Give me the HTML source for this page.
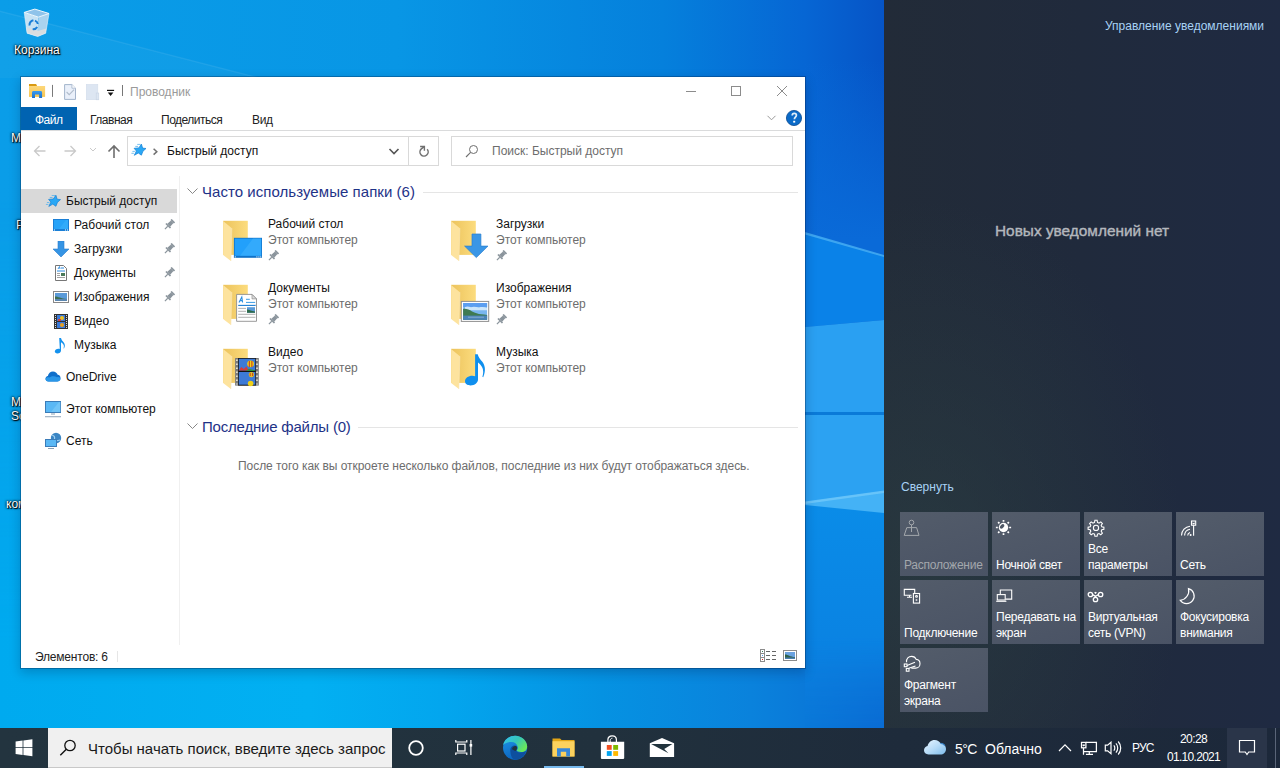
<!DOCTYPE html>
<html><head><meta charset="utf-8">
<style>
*{margin:0;padding:0;box-sizing:border-box}
html,body{width:1280px;height:768px;overflow:hidden;font-family:"Liberation Sans",sans-serif;font-size:12px;background:#0a90e0}
.a{position:absolute;white-space:nowrap}
#wall{position:absolute;left:0;top:0;width:1280px;height:768px}
#win{position:absolute;left:20px;top:76px;width:786px;height:593px;background:#fff;border:1px solid rgba(0,30,70,.32);background-clip:padding-box;box-shadow:0 4px 10px rgba(0,20,60,.22)}
#ac{position:absolute;left:884px;top:0;width:396px;height:728px;background:radial-gradient(ellipse 260px 360px at 40px 560px,rgba(44,64,68,.6),rgba(44,64,68,0)),linear-gradient(90deg,#222b38 0%,#202a3c 50%,#1f2a42 100%)}
#tb{position:absolute;left:0;top:728px;width:1280px;height:40px;background:linear-gradient(90deg,#23343f 0,#21313d 600px,#1e2b3b 900px,#1c283a 100%)}
.tile{position:absolute;width:88px;height:64px;background:linear-gradient(160deg,#535c6a,#4a5365)}
.tile .l{position:absolute;left:4px;bottom:3px;color:#fff;font-size:12px;line-height:16px;white-space:nowrap;letter-spacing:-0.25px}
.dl{position:absolute;color:#fff;font-size:12px;line-height:12px;white-space:nowrap;text-shadow:0 0 2px #000,0 0 3px rgba(0,0,0,.8),1px 1px 1px #000}
</style></head><body>
<svg id="wall" width="1280" height="768" viewBox="0 0 1280 768">
 <defs>
  <linearGradient id="wt" x1="0" y1="0" x2="884" y2="0" gradientUnits="userSpaceOnUse">
   <stop offset="0" stop-color="#0a9de8"/>
   <stop offset="0.45" stop-color="#0896e5"/>
   <stop offset="0.75" stop-color="#0580dc"/>
   <stop offset="0.91" stop-color="#0666d4"/>
   <stop offset="1" stop-color="#0654c6"/>
  </linearGradient>
  <linearGradient id="wb" x1="0" y1="0" x2="884" y2="0" gradientUnits="userSpaceOnUse">
   <stop offset="0" stop-color="#00aaef"/>
   <stop offset="0.35" stop-color="#02b0f2"/>
   <stop offset="0.5" stop-color="#03a6ee"/>
   <stop offset="0.68" stop-color="#0592e2"/>
   <stop offset="0.85" stop-color="#0a82dc"/>
   <stop offset="1" stop-color="#0a6cd4"/>
  </linearGradient>
  <linearGradient id="wbv" x1="0" y1="200" x2="0" y2="728" gradientUnits="userSpaceOnUse"><stop offset="0" stop-color="#fff" stop-opacity="0"/><stop offset=".85" stop-color="#fff" stop-opacity="1"/></linearGradient>
  <mask id="mb"><rect x="0" y="200" width="884" height="528" fill="url(#wbv)"/></mask>
  <linearGradient id="rtop" x1="0" y1="60" x2="0" y2="240" gradientUnits="userSpaceOnUse"><stop offset="0" stop-color="#0a6ad8" stop-opacity="0"/><stop offset="1" stop-color="#0a6ad8" stop-opacity="1"/></linearGradient>
  <linearGradient id="rbot" x1="0" y1="505" x2="0" y2="728" gradientUnits="userSpaceOnUse"><stop offset="0" stop-color="#0a8ce8"/><stop offset=".7" stop-color="#0a82e2"/><stop offset="1" stop-color="#0a78dc"/></linearGradient>
 <linearGradient id="mrg" x1="0" y1="500" x2="0" y2="728" gradientUnits="userSpaceOnUse"><stop offset="0" stop-color="#fff"/><stop offset=".6" stop-color="#fff"/><stop offset="1" stop-color="#fff" stop-opacity="0"/></linearGradient>
  <mask id="mr"><rect x="800" y="500" width="90" height="228" fill="url(#mrg)"/></mask>
 </defs>
 <rect width="1280" height="768" fill="url(#wt)"/>
 <rect x="0" y="200" width="884" height="528" fill="url(#wb)" mask="url(#mb)"/>
 <path d="M0 11L260 78 0 78z" fill="#ffffff" opacity=".03"/>
 <path d="M0 10.5L260 77.5 260 79 0 12z" fill="#ffffff" opacity=".07"/>
 <!-- right strip panes -->
 <path d="M805 60H884V256L805 233z" fill="url(#rtop)"/>
 <path d="M805 233L884 256V320L805 327z" fill="#0a82e8"/>
 <path d="M805 232L884 255V257L805 234.5z" fill="#4ab0f4" opacity=".8"/>
 <path d="M805 327L884 320V413H805z" fill="#2aa0f2"/>
 <rect x="805" y="412" width="79" height="3" fill="#0a7ad8"/>
 <path d="M805 415H884V492L805 503z" fill="#2ca2f2"/>
 <path d="M805 502L884 491 884 514 805 506z" fill="#44b2f6"/>
 <path d="M805 501.5L884 490.5 884 493 805 504z" fill="#70c8fa" opacity=".8"/>
 <path d="M805 505L884 513V728H805z" fill="url(#rbot)" mask="url(#mr)"/>
</svg>
<!-- desktop icons -->
<svg class="a" style="left:10px;top:4px" width="56" height="40" viewBox="0 0 56 40">
 <path d="M14.2 8.4L17.1 29.2 27.7 32.5 28.4 13.1z" fill="#c6e2f4"/>
 <path d="M28.4 13.1L27.7 32.5 35.7 29.2 39 9.5z" fill="#a9d3ef"/>
 <path d="M16.2 23L17.1 29.2 27.7 32.5 35.7 29.2 36.3 24.5 27.8 27z" fill="#d9dde0"/>
 <path d="M14.2 8.4L24.8 5.1 39 9.5 28.4 13.1z" fill="#8fc3ea"/>
 <path d="M14.2 8.4L24.8 5.1 39 9.5 28.4 13.1z" fill="none" stroke="#eef7fd" stroke-width="1"/>
 <path d="M14.2 8.4L17.1 29.2 27.7 32.5 35.7 29.2 39 9.5" fill="none" stroke="#e6f2fa" stroke-width=".6"/>
 <g fill="none" stroke="#1b7fd8" stroke-width="2"><path d="M19.6 21.5c-.5-2.3 1.2-4.8 3.8-5.3"/><path d="M25 16.6c1.6.6 2.6 1.8 2.8 3.4"/><path d="M27.2 22.9c-.9 1.6-2.6 2.4-4.5 2.2"/></g>
</svg>
<div class="dl" style="left:14px;top:44px">Корзина</div>
<div class="dl" style="left:11px;top:132px">Microsoft Edge</div>
<div class="dl" style="left:16px;top:219px">Panel</div>
<div class="dl" style="left:11px;top:396px">Microsoft</div>
<div class="dl" style="left:11px;top:410px">Solitaire</div>
<div class="dl" style="left:6px;top:498px">компьютер</div>
<div id="ac"></div>
<div id="tb"></div>
<!-- EXPLORER WINDOW -->
<div id="win"></div>
<!-- title bar icons -->
<svg class="a" style="left:26px;top:80px" width="96" height="24" viewBox="0 0 96 24">
 <defs><linearGradient id="fy" x1="0" y1="0" x2="0" y2="1"><stop offset="0" stop-color="#fdd77a"/><stop offset="1" stop-color="#f7c652"/></linearGradient>
 <linearGradient id="fbl" x1="0" y1="0" x2="0" y2="1"><stop offset="0" stop-color="#3a9bef"/><stop offset="1" stop-color="#1d6fca"/></linearGradient></defs>
 <path d="M3 4.1h7l1 1.3-1 1.4H3z" fill="#d99a12"/>
 <rect x="3" y="6" width="16.1" height="10.9" fill="url(#fy)"/>
 <path d="M6 18V12.6c0-.9.6-1.5 1.5-1.5h7.1c.9 0 1.5.6 1.5 1.5V18h-3v-3.4H9V18z" fill="url(#fbl)"/>
 <rect x="26" y="4.9" width="1" height="12" fill="#7a7a7a"/>
 <path d="M38.6 4.6h7.3l3.6 3.6v11.2H38.6z" fill="#eaf0fa" stroke="#a3b4cc" stroke-width="1"/>
 <path d="M45.9 4.6v3.6h3.6" fill="#fff" stroke="#a3b4cc" stroke-width=".8"/>
 <path d="M40.6 12l2.6 2.6 4.9-4.9" fill="none" stroke="#b0bccb" stroke-width="1.1"/>
 <rect x="60.3" y="4.4" width="11.5" height="15.3" fill="#dde6f2" stroke="#d3ddeb" stroke-width=".6"/>
 <rect x="70.2" y="13" width="2.6" height="6.8" fill="#dde6f2" stroke="#c8d3e3" stroke-width=".6"/>
 <rect x="81" y="9.8" width="7.1" height="1.2" fill="#111"/>
 <path d="M81.8 12.6h5.6L84.6 16z" fill="#111"/>
</svg>
<div class="a" style="left:122px;top:85px;width:1px;height:11px;background:#777"></div>
<div class="a" style="left:130px;top:86px;font-size:12px;line-height:12px;color:#9a9a9a">Проводник</div>
<!-- window buttons -->
<div class="a" style="left:686px;top:91px;width:10px;height:1px;background:#8c8c8c"></div>
<div class="a" style="left:731px;top:86px;width:10px;height:10px;border:1px solid #8c8c8c"></div>
<svg class="a" style="left:776px;top:85px" width="12" height="12" viewBox="0 0 12 12"><path d="M1 1L11 11M11 1L1 11" stroke="#8c8c8c" stroke-width="1"/></svg>
<!-- ribbon tabs -->
<div class="a" style="left:21px;top:107px;width:56px;height:23px;background:#0063b1"></div>
<div class="a" style="left:35px;top:114px;font-size:12px;line-height:12px;color:#fff;letter-spacing:-0.5px">Файл</div>
<div class="a" style="left:90px;top:114px;font-size:12px;line-height:12px;color:#222;letter-spacing:-0.5px">Главная</div>
<div class="a" style="left:161px;top:114px;font-size:12px;line-height:12px;color:#222;letter-spacing:-0.5px">Поделиться</div>
<div class="a" style="left:252px;top:114px;font-size:12px;line-height:12px;color:#222;letter-spacing:-0.3px">Вид</div>
<svg class="a" style="left:766px;top:113px" width="11" height="9" viewBox="0 0 11 9"><path d="M1.5 2.8l4 4 4-4" fill="none" stroke="#999" stroke-width="1"/></svg>
<svg class="a" style="left:785px;top:109px" width="18" height="18" viewBox="0 0 18 18">
 <circle cx="9" cy="9" r="7.6" fill="#0a6ac8" stroke="#0a4a90" stroke-width=".8"/>
 <path d="M7.2 6.6c0-1.4.8-2.3 2.1-2.3 1.3 0 2.1.8 2.1 2 0 1.7-2 2-2 3.9" fill="none" stroke="#dcecf8" stroke-width="1.7"/>
 <rect x="8.2" y="11.8" width="2" height="1.8" fill="#fff"/>
</svg>
<div class="a" style="left:21px;top:130px;width:784px;height:1px;background:#dadbdc"></div>
<!-- nav arrows -->
<svg class="a" style="left:33px;top:144px" width="14" height="14" viewBox="0 0 14 14"><path d="M1.5 7h11M6.5 2L1.5 7l5 5" fill="none" stroke="#c9c9c9" stroke-width="1.3"/></svg>
<svg class="a" style="left:63px;top:144px" width="14" height="14" viewBox="0 0 14 14"><path d="M1.5 7h11M7.5 2l5 5-5 5" fill="none" stroke="#c9c9c9" stroke-width="1.3"/></svg>
<svg class="a" style="left:89px;top:147px" width="8" height="6" viewBox="0 0 8 6"><path d="M1 1l3 3 3-3" fill="none" stroke="#c9c9c9" stroke-width="1"/></svg>
<svg class="a" style="left:107px;top:144px" width="14" height="15" viewBox="0 0 14 15"><path d="M7 14V2M1.5 7.5L7 2l5.5 5.5" fill="none" stroke="#6e6e6e" stroke-width="1.6"/></svg>
<!-- address box -->
<div class="a" style="left:127px;top:136px;width:312px;height:30px;border:1px solid #d9d9d9"></div>
<div class="a" style="left:408px;top:137px;width:1px;height:28px;background:#d9d9d9"></div>
<svg class="a" style="left:128px;top:138px" width="36" height="24" viewBox="0 0 36 24">
 <path d="M13.4 6.1L14.6 10.1 18 10.5 14.9 13.3 13.4 17.2 10.3 15 6.3 17.3 8.4 13 6.1 10.3 10.8 9.9z" fill="#2aa8f5" stroke="#137fd6" stroke-width=".7" stroke-linejoin="round"/>
 <path d="M9.2 6.4h3.3M7.3 8.4h2.8M4.4 13.4h2.5M3.4 15.3h2.5" stroke="#58b4ee" stroke-width="1" opacity=".8"/>
 <path d="M25.6 10.8l3.2 2.9-3.2 2.9" fill="none" stroke="#707070" stroke-width="1.5"/>
</svg>
<div class="a" style="left:167px;top:145px;font-size:12px;line-height:12px;color:#111">Быстрый доступ</div>
<svg class="a" style="left:388px;top:147px" width="12" height="9" viewBox="0 0 12 9"><path d="M1.5 2l4.5 4.5L10.5 2" fill="none" stroke="#555" stroke-width="1.6"/></svg>
<svg class="a" style="left:412px;top:140px" width="24" height="24" viewBox="0 0 24 24"><path d="M15.2 9.3A4.1 4.1 0 1 1 9.3 8.9L12 6.9" fill="none" stroke="#707070" stroke-width="1.5"/><path d="M8.1 6.5H12.4V10.7" fill="none" stroke="#707070" stroke-width="1.4"/></svg>
<!-- search box -->
<div class="a" style="left:451px;top:136px;width:342px;height:30px;border:1px solid #d9d9d9"></div>
<svg class="a" style="left:465px;top:144px" width="14" height="14" viewBox="0 0 14 14"><circle cx="8.5" cy="5.5" r="4" fill="none" stroke="#6e6e6e" stroke-width="1"/><path d="M5.6 8.4L1 13" stroke="#6e6e6e" stroke-width="1.1"/></svg>
<div class="a" style="left:492px;top:145px;font-size:12px;line-height:12px;color:#6d6d6d">Поиск: Быстрый доступ</div>
<!-- NAV PANE -->
<div class="a" style="left:21px;top:189px;width:156px;height:24px;background:#d9d9d9"></div>
<div class="a" style="left:179px;top:176px;width:1px;height:469px;background:#f0f0f0"></div>
<svg class="a" style="left:40px;top:190px" width="24" height="20" viewBox="0 0 24 20">
 <path d="M15.9 5.2L17.1 9.2 20.5 9.6 17.4 12.4 15.9 16.3 12.8 14.1 8.8 16.4 10.9 12.1 8.6 9.4 13.3 9z" fill="#2aa8f5" stroke="#137fd6" stroke-width=".7" stroke-linejoin="round"/>
 <path d="M11.7 5.5h3.3M9.8 7.5h2.8M6.9 12.5h2.5M5.9 14.4h2.5" stroke="#58b4ee" stroke-width="1" opacity=".8"/>
</svg>
<div class="a" style="left:66px;top:195px;color:#111;line-height:12px">Быстрый доступ</div>
<svg class="a" style="left:53px;top:219px" width="16" height="12" viewBox="0 0 16 12">
 <rect x="0" y="0" width="16" height="12" fill="#1a7fd6"/>
 <rect x="1" y="1" width="14" height="9" fill="#27a3f8"/>
 <path d="M6 10L13 1h2v9z" fill="#3ab0fb" opacity=".6"/>
 <rect x="1" y="10.5" width="1" height="1" fill="#fff"/><rect x="12" y="10.5" width="1" height="1" fill="#fff"/><rect x="14" y="10.5" width="1" height="1" fill="#fff"/>
</svg>
<div class="a" style="left:74px;top:219px;color:#111;line-height:12px">Рабочий стол</div>
<svg class="a" style="left:53px;top:241px" width="16" height="16" viewBox="0 0 16 16">
 <path d="M5 0h6v8h5l-8 8-8-8h5z" fill="#3594e4" stroke="#2a7ccc" stroke-width=".6"/>
</svg>
<div class="a" style="left:74px;top:243px;color:#111;line-height:12px">Загрузки</div>
<svg class="a" style="left:55px;top:265px" width="12" height="16" viewBox="0 0 12 16">
 <path d="M.5 .5h8l3 3v12H.5z" fill="#fff" stroke="#777"/>
 <path d="M3 4l1.5-2.5L5 4" fill="none" stroke="#2a8ae0" stroke-width=".9"/>
 <path d="M6 3h3M2 6h8" stroke="#2a8ae0" stroke-width="1"/>
 <path d="M2 8.5h3M2 10.5h3M2 12.5h8" stroke="#999" stroke-width=".9"/>
 <rect x="6" y="8" width="4" height="3" fill="#4a7a5a"/>
</svg>
<div class="a" style="left:74px;top:267px;color:#111;line-height:12px">Документы</div>
<svg class="a" style="left:53px;top:291px" width="16" height="12" viewBox="0 0 16 12">
 <rect x=".5" y=".5" width="15" height="11" fill="#fff" stroke="#888"/>
 <rect x="2" y="2" width="12" height="8" fill="#5a9ad8"/>
 <path d="M2 5.5c3 0 6 2 12 2.5V10H2z" fill="#3d6e52"/>
 <rect x="2" y="8" width="12" height="2" fill="#5b86b0"/>
</svg>
<div class="a" style="left:74px;top:291px;color:#111;line-height:12px">Изображения</div>
<svg class="a" style="left:54px;top:314px" width="14" height="15" viewBox="0 0 14 15">
 <rect x="0" y="0" width="14" height="15" fill="#333"/>
 <rect x="3" y="1" width="8" height="6" fill="#3b7ad8"/><rect x="3" y="8" width="8" height="6" fill="#3b7ad8"/>
 <circle cx="8" cy="4" r="2" fill="#f0c020"/><circle cx="8" cy="11" r="2" fill="#e8a020"/>
 <rect x="4" y="5" width="3" height="2" fill="#d04040"/>
 <path d="M1 1.5h1M1 3.5h1M1 5.5h1M1 7.5h1M1 9.5h1M1 11.5h1M1 13.5h1M12 1.5h1M12 3.5h1M12 5.5h1M12 7.5h1M12 9.5h1M12 11.5h1M12 13.5h1" stroke="#ddd" stroke-width="1"/>
</svg>
<div class="a" style="left:74px;top:315px;color:#111;line-height:12px">Видео</div>
<svg class="a" style="left:54px;top:337px" width="13" height="17" viewBox="0 0 13 17">
 <path d="M5.2 1h1.8c.4 2 1.6 3 2.6 4.2 1.6 2 1.6 4 .4 6.2l-.5-.2c.8-2 .4-3.6-.9-4.8-.6-.5-1.2-.9-1.6-1.2V13.5c0 1.7-1.7 3-3.6 3-1.6 0-2.6-.8-2.6-1.9 0-1.5 1.7-2.8 3.6-2.8.5 0 1 .1 1.4.3z" fill="#1592ee"/>
</svg>
<div class="a" style="left:74px;top:339px;color:#111;line-height:12px">Музыка</div>
<svg class="a" style="left:45px;top:371px" width="16" height="11" viewBox="0 0 16 11">
 <path d="M3.5 10.5C1.6 10.5 .5 9.3 .5 7.8c0-1.4 1-2.5 2.4-2.7C3.3 2.4 5.4.5 8 .5c2.2 0 4 1.4 4.7 3.3 1.8.2 2.8 1.6 2.8 3.2 0 1.9-1.4 3.5-3.4 3.5z" fill="#0f6fcb"/>
 <path d="M3.5 10.5C1.6 10.5 .5 9.3 .5 7.8 .9 6.5 2.5 5.8 4.5 6.5 6.5 5 9.5 4.7 12 6.2c2-.6 3.5.3 3.5 1.8 0 1.4-1.4 2.5-3.4 2.5z" fill="#2a97e8"/>
</svg>
<div class="a" style="left:66px;top:371px;color:#111;line-height:12px">OneDrive</div>
<svg class="a" style="left:45px;top:401px" width="16" height="17" viewBox="0 0 16 17">
 <rect x=".5" y=".5" width="15" height="11" fill="#5ab8f5" stroke="#3b7cb8"/>
 <path d="M6 11L14 1h1.5v10z" fill="#7fcbf8" opacity=".6"/>
 <rect x="6" y="12.5" width="4" height="1" fill="#8aa0b4"/>
 <rect x="0" y="15" width="16" height="1.3" fill="#a8b8c8"/>
</svg>
<div class="a" style="left:66px;top:403px;color:#111;line-height:12px">Этот компьютер</div>
<svg class="a" style="left:45px;top:432px" width="17" height="17" viewBox="0 0 17 17">
 <circle cx="11" cy="6" r="5.2" fill="#3b86c4"/>
 <path d="M7 3c2 .5 3 2 2.5 4S12 9 15 8" fill="none" stroke="#9fd0f0" stroke-width="1.2"/>
 <rect x=".5" y="7.5" width="11" height="7" fill="#5ab8f5" stroke="#3b7cb8"/>
 <rect x="3" y="16" width="6" height="1" fill="#8aa0b4"/>
</svg>
<div class="a" style="left:66px;top:435px;color:#111;line-height:12px">Сеть</div>
<!-- nav pins -->
<svg class="a" style="left:163px;top:219px" width="12" height="12" viewBox="-6 -6 12 12"><g transform="rotate(45)" fill="#8a949c"><rect x="-2.4" y="-6.2" width="4.8" height="1.7"/><path d="M-1.7 -4.6H1.7L2 .4H-2z"/><rect x="-3.2" y=".3" width="6.4" height="1.6"/><rect x="-.6" y="1.8" width="1.2" height="4"/></g></svg>
<svg class="a" style="left:163px;top:243px" width="12" height="12" viewBox="-6 -6 12 12"><g transform="rotate(45)" fill="#8a949c"><rect x="-2.4" y="-6.2" width="4.8" height="1.7"/><path d="M-1.7 -4.6H1.7L2 .4H-2z"/><rect x="-3.2" y=".3" width="6.4" height="1.6"/><rect x="-.6" y="1.8" width="1.2" height="4"/></g></svg>
<svg class="a" style="left:163px;top:267px" width="12" height="12" viewBox="-6 -6 12 12"><g transform="rotate(45)" fill="#8a949c"><rect x="-2.4" y="-6.2" width="4.8" height="1.7"/><path d="M-1.7 -4.6H1.7L2 .4H-2z"/><rect x="-3.2" y=".3" width="6.4" height="1.6"/><rect x="-.6" y="1.8" width="1.2" height="4"/></g></svg>
<svg class="a" style="left:163px;top:291px" width="12" height="12" viewBox="-6 -6 12 12"><g transform="rotate(45)" fill="#8a949c"><rect x="-2.4" y="-6.2" width="4.8" height="1.7"/><path d="M-1.7 -4.6H1.7L2 .4H-2z"/><rect x="-3.2" y=".3" width="6.4" height="1.6"/><rect x="-.6" y="1.8" width="1.2" height="4"/></g></svg>
<!-- status bar -->
<div class="a" style="left:35px;top:651px;color:#222;line-height:12px;letter-spacing:-0.2px">Элементов: 6</div>
<div class="a" style="left:117px;top:651px;width:1px;height:11px;background:#e6e6e6"></div>
<svg class="a" style="left:760px;top:649px" width="17" height="13" viewBox="0 0 17 13">
 <rect x=".5" y=".5" width="4" height="12" fill="#fff" stroke="#8c8c8c"/>
 <path d="M.5 4.5h4M.5 8.5h4" stroke="#8c8c8c"/>
 <rect x="2" y="2" width="1" height="1" fill="#3a7a5a"/><rect x="2" y="6" width="1" height="1" fill="#5a9af0"/><rect x="2" y="10" width="1" height="1" fill="#e02020"/>
 <path d="M6 2.5h4M12 2.5h4M6 6.5h4M12 6.5h4M6 10.5h4M12 10.5h4" stroke="#666" stroke-width="1"/>
</svg>
<svg class="a" style="left:783px;top:650px" width="14" height="11" viewBox="0 0 14 11">
 <rect x=".5" y=".5" width="13" height="10" fill="#fff" stroke="#8c8c8c"/>
 <rect x="2" y="2" width="10" height="7" fill="#6aa2e0"/>
 <path d="M2 4.5c3 0 5 2.5 10 2.5V9H2z" fill="#2e6048"/>
 <rect x="2" y="7.5" width="10" height="1.5" fill="#4b7fb0"/>
</svg>
<!-- CONTENT -->
<svg width="0" height="0" style="position:absolute"><defs><linearGradient id="fb" x1="0" y1="0" x2="1" y2="0"><stop offset="0" stop-color="#ecc35c"/><stop offset="1" stop-color="#fcdc7e"/></linearGradient></defs></svg>
<svg class="a" style="left:186px;top:187px" width="13" height="9" viewBox="0 0 13 9"><path d="M1.5 1.5l5 5 5-5" fill="none" stroke="#888" stroke-width="1"/></svg>
<div class="a" style="left:202px;top:184px;font-size:15px;line-height:15px;color:#1e3287;letter-spacing:0.05px">Часто используемые папки (6)</div>
<div class="a" style="left:423px;top:192px;width:375px;height:1px;background:#e5e5e5"></div>
<svg class="a" style="left:216px;top:214px" width="54" height="52" viewBox="0 0 54 52">
 <rect x="7.1" y="6.8" width="24.7" height="34.1" fill="url(#fb)"/>
 <path d="M7.1 6.9L15.9 14.2 14.9 47 7.1 41z" fill="#fde39e"/>
 <path d="M15.9 14.2L14.9 47" stroke="#f8e6b8" stroke-width=".6"/>
 <rect x="17.9" y="23.8" width="28.1" height="20" fill="#0f72c8"/>
 <rect x="18.7" y="24.6" width="26.5" height="17.2" fill="#22a0fb"/>
 <path d="M24 41.8L37 24.6h8.2v17.2z" fill="#41b3fd" opacity=".55"/>
 <rect x="18.8" y="42.4" width="1" height="1" fill="#fff"/><rect x="40.4" y="42.4" width="1" height="1" fill="#fff"/><rect x="42.4" y="42.4" width="1" height="1" fill="#fff"/><rect x="44.2" y="42.4" width="1" height="1" fill="#fff"/>
</svg>
<div class="a" style="left:268px;top:218px;color:#111;line-height:12px">Рабочий стол</div>
<div class="a" style="left:268px;top:234px;color:#6d6d6d;line-height:12px">Этот компьютер</div>
<svg class="a" style="left:267px;top:250px" width="12" height="12" viewBox="-6 -6 12 12"><g transform="rotate(45)" fill="#8a949c"><rect x="-2.4" y="-6.2" width="4.8" height="1.7"/><path d="M-1.7 -4.6H1.7L2 .4H-2z"/><rect x="-3.2" y=".3" width="6.4" height="1.6"/><rect x="-.6" y="1.8" width="1.2" height="4"/></g></svg>
<svg class="a" style="left:216px;top:278px" width="54" height="52" viewBox="0 0 54 52">
 <rect x="7.1" y="6.8" width="24.7" height="34.1" fill="url(#fb)"/>
 <path d="M7.1 6.9L15.9 14.2 14.9 47 7.1 41z" fill="#fde39e"/>
 <path d="M15.9 14.2L14.9 47" stroke="#f8e6b8" stroke-width=".6"/>
 <path d="M20.6 16.4h15.4l4.5 4.5v22.4H20.6z" fill="#fff" stroke="#8f8f8f" stroke-width=".9"/>
 <path d="M36 16.4v4.5h4.5z" fill="#ddd" stroke="#8f8f8f" stroke-width=".7"/>
 <path d="M23 24.5l2.8-5.5.8 5.5M23.8 22.6h2.6" fill="none" stroke="#2b8fe0" stroke-width="1.1"/>
 <path d="M30 21.3h3.8M30 24.4h9.2" stroke="#3a9ce6" stroke-width="1"/>
 <path d="M22.2 27.4h17.4" stroke="#1d7fd4" stroke-width="1.1"/>
 <path d="M22.2 30.4h7.8M22.2 33.3h7.8M22.2 36.3h17.2M22.2 39.3h17.2" stroke="#a8a8a8" stroke-width=".9"/>
 <rect x="31" y="29.2" width="8" height="5.6" fill="#5a9ad8"/><path d="M31 31.5c2.5 0 4.5 1.8 8 2v1.3h-8z" fill="#2e6a48"/>
</svg>
<div class="a" style="left:268px;top:282px;color:#111;line-height:12px">Документы</div>
<div class="a" style="left:268px;top:298px;color:#6d6d6d;line-height:12px">Этот компьютер</div>
<svg class="a" style="left:267px;top:314px" width="12" height="12" viewBox="-6 -6 12 12"><g transform="rotate(45)" fill="#8a949c"><rect x="-2.4" y="-6.2" width="4.8" height="1.7"/><path d="M-1.7 -4.6H1.7L2 .4H-2z"/><rect x="-3.2" y=".3" width="6.4" height="1.6"/><rect x="-.6" y="1.8" width="1.2" height="4"/></g></svg>
<svg class="a" style="left:216px;top:342px" width="54" height="52" viewBox="0 0 54 52">
 <rect x="7.1" y="6.8" width="24.7" height="34.1" fill="url(#fb)"/>
 <path d="M7.1 6.9L15.9 14.2 14.9 47 7.1 41z" fill="#fde39e"/>
 <path d="M15.9 14.2L14.9 47" stroke="#f8e6b8" stroke-width=".6"/>
 <rect x="19.1" y="16" width="23.7" height="27.6" fill="#7a7a7a"/><rect x="22" y="16" width="18.1" height="27.6" fill="#1a1a1a"/>
 <rect x="22.8" y="16.8" width="16.5" height="12.2" fill="#3d7ad6"/>
 <rect x="22.8" y="30" width="16.5" height="12.7" fill="#3d7ad6"/>
 <path d="M22.8 29h16.5" stroke="#111" stroke-width="1"/>
 <circle cx="34.6" cy="21.8" r="3.4" fill="#f2d018"/><path d="M33.3 19v6M35.9 19v6" stroke="#c02020" stroke-width=".9"/>
 <path d="M22.8 28.5l2.5-3.5 2.5 2 2.5-2.5 2.5 4z" fill="#d83a3a"/><path d="M30 28.8l3-2 6 1.8v.4z" fill="#2c9a3a"/>
 <circle cx="35.4" cy="32.6" r="2.6" fill="#e8c020"/><path d="M34.2 31v3M36.6 31v3" stroke="#b82020" stroke-width=".8"/>
 <circle cx="34.6" cy="41.5" r="2.8" fill="#f0d018"/>
 <path d="M20.9 17.6v1.4M20.9 21.5v1.4M20.9 25.5v1.4M20.9 29.5v1.4M20.9 33.5v1.4M20.9 37.5v1.4M20.9 41.4v1.2M41 17.6v1.4M41 21.5v1.4M41 25.5v1.4M41 29.5v1.4M41 33.5v1.4M41 37.5v1.4M41 41.4v1.2" stroke="#f4f0dc" stroke-width="1.5"/>
</svg>
<div class="a" style="left:268px;top:346px;color:#111;line-height:12px">Видео</div>
<div class="a" style="left:268px;top:362px;color:#6d6d6d;line-height:12px">Этот компьютер</div>
<svg class="a" style="left:444px;top:214px" width="54" height="52" viewBox="0 0 54 52">
 <rect x="7.1" y="6.8" width="24.7" height="34.1" fill="url(#fb)"/>
 <path d="M7.1 6.9L15.9 14.2 14.9 47 7.1 41z" fill="#fde39e"/>
 <path d="M15.9 14.2L14.9 47" stroke="#f8e6b8" stroke-width=".6"/>
 <path d="M28 20h8.9v12.1H44L32.3 43.6 20.6 32.1H28z" fill="#3a96e6" stroke="#2a7fd0" stroke-width=".7"/>
</svg>
<div class="a" style="left:496px;top:218px;color:#111;line-height:12px">Загрузки</div>
<div class="a" style="left:496px;top:234px;color:#6d6d6d;line-height:12px">Этот компьютер</div>
<svg class="a" style="left:495px;top:250px" width="12" height="12" viewBox="-6 -6 12 12"><g transform="rotate(45)" fill="#8a949c"><rect x="-2.4" y="-6.2" width="4.8" height="1.7"/><path d="M-1.7 -4.6H1.7L2 .4H-2z"/><rect x="-3.2" y=".3" width="6.4" height="1.6"/><rect x="-.6" y="1.8" width="1.2" height="4"/></g></svg>
<svg class="a" style="left:444px;top:278px" width="54" height="52" viewBox="0 0 54 52">
 <rect x="7.1" y="6.8" width="24.7" height="34.1" fill="url(#fb)"/>
 <path d="M7.1 6.9L15.9 14.2 14.9 47 7.1 41z" fill="#fde39e"/>
 <path d="M15.9 14.2L14.9 47" stroke="#f8e6b8" stroke-width=".6"/>
 <rect x="17.3" y="23.4" width="27.4" height="20" fill="#fff" stroke="#8f8f8f" stroke-width="1"/>
 <rect x="19.1" y="25" width="24" height="16.8" fill="#79b6f0"/>
 <path d="M19.1 25h24v4H19.1z" fill="#5b9ef0"/>
 <path d="M21 29c2-1 4-.5 6 .3 2-1 5-.5 8 .2 3-.8 6-.3 8 .3v2.5H21z" fill="#dbeefc" opacity=".85"/>
 <path d="M19.1 31c3-.5 6 .5 9 2.5 3 1.5 6 2.5 9 2.7 2 .1 4 .3 6 .7v4.9H19.1z" fill="#3f7a52"/>
 <rect x="19.1" y="37.6" width="24" height="4.2" fill="#4b83b8"/>
 <path d="M24 39.2h16" stroke="#a9c8e2" stroke-width=".6"/>
</svg>
<div class="a" style="left:496px;top:282px;color:#111;line-height:12px">Изображения</div>
<div class="a" style="left:496px;top:298px;color:#6d6d6d;line-height:12px">Этот компьютер</div>
<svg class="a" style="left:495px;top:314px" width="12" height="12" viewBox="-6 -6 12 12"><g transform="rotate(45)" fill="#8a949c"><rect x="-2.4" y="-6.2" width="4.8" height="1.7"/><path d="M-1.7 -4.6H1.7L2 .4H-2z"/><rect x="-3.2" y=".3" width="6.4" height="1.6"/><rect x="-.6" y="1.8" width="1.2" height="4"/></g></svg>
<svg class="a" style="left:444px;top:342px" width="54" height="52" viewBox="0 0 54 52">
 <rect x="7.1" y="6.8" width="24.7" height="34.1" fill="url(#fb)"/>
 <path d="M7.1 6.9L15.9 14.2 14.9 47 7.1 41z" fill="#fde39e"/>
 <path d="M15.9 14.2L14.9 47" stroke="#f8e6b8" stroke-width=".6"/>
 <path d="M31.1 12.2h2.6c.6 3 2.7 5.2 4.4 7.4 2.6 3.5 4.3 8 1.1 15.6l-.8-.4c1.8-5.6.5-9.6-2.4-12.6-.7-.7-1.4-1.3-2-1.8V37.6c0 3.2-3.4 5.9-7.4 5.9-3.3 0-5.6-1.8-5.6-4.2 0-3.2 3.3-5.6 7.3-5.6 1 0 1.9.2 2.8.5z" fill="#0f8fee"/>
</svg>
<div class="a" style="left:496px;top:346px;color:#111;line-height:12px">Музыка</div>
<div class="a" style="left:496px;top:362px;color:#6d6d6d;line-height:12px">Этот компьютер</div>
<svg class="a" style="left:186px;top:422px" width="13" height="9" viewBox="0 0 13 9"><path d="M1.5 1.5l5 5 5-5" fill="none" stroke="#888" stroke-width="1"/></svg>
<div class="a" style="left:202px;top:419px;font-size:15px;line-height:15px;color:#1e3287;letter-spacing:-0.2px">Последние файлы (0)</div>
<div class="a" style="left:358px;top:427px;width:440px;height:1px;background:#e5e5e5"></div>
<div class="a" style="left:238px;top:460px;color:#6d6d6d;line-height:12px;letter-spacing:-0.05px">После того как вы откроете несколько файлов, последние из них будут отображаться здесь.</div><!-- ACTION CENTER -->
<div class="a" style="left:1105px;top:20px;color:#a8d2f5;line-height:12px">Управление уведомлениями</div>
<div class="a" style="left:995px;top:223px;font-size:15.4px;line-height:15px;-webkit-text-stroke:0.4px #b3b7bd;color:#b3b7bd">Новых уведомлений нет</div>
<div class="a" style="left:901px;top:481px;color:#a8d2f5;line-height:12px">Свернуть</div>
<div class="tile" style="left:900px;top:512px">
 <svg class="a" style="left:0;top:0" width="24" height="28" viewBox="0 0 24 28"><g fill="none" stroke="#a3a7ac" stroke-width="1"><circle cx="11.5" cy="10.5" r="2.3"/><path d="M11.5 12.8v7.2M6.8 15.6h9.8l2.4 7.8H4.2z"/></g></svg>
 <div class="l" style="color:#a3a7ac">Расположение</div>
</div>
<div class="tile" style="left:992px;top:512px">
 <svg class="a" style="left:0;top:0" width="24" height="28" viewBox="0 0 24 28"><g stroke="#fff" stroke-width="1.7" stroke-linecap="butt"><path d="M11.5 7.9v1.9M11.5 21.2v1.9M3.9 15.5h1.9M17.2 15.5h1.9M6.1 10.1l1.3 1.3M15.6 19.6l1.3 1.3M6.1 20.9l1.3-1.3M15.6 11.4l1.3-1.3"/></g><circle cx="11.5" cy="15.5" r="4.7" fill="#fff"/><ellipse cx="10.1" cy="14.4" rx="2.7" ry="1.7" transform="rotate(-45 10.1 14.4)" fill="#4f5866"/></svg>
 <div class="l">Ночной свет</div>
</div>
<div class="tile" style="left:1084px;top:512px">
 <svg class="a" style="left:0;top:0" width="24" height="28" viewBox="0 0 24 28"><g fill="none" stroke="#fff" stroke-width="1.1"><circle cx="12" cy="15.9" r="2.6"/><path d="M10.9 8.3h2.2l.4 2.1 1.5.7 1.8-1.2 1.6 1.6-1.2 1.8.6 1.5 2.1.4v2.2l-2.1.4-.6 1.5 1.2 1.8-1.6 1.6-1.8-1.2-1.5.6-.4 2.1h-2.2l-.4-2.1-1.5-.6-1.8 1.2-1.6-1.6 1.2-1.8-.6-1.5-2.1-.4v-2.2l2.1-.4.6-1.5-1.2-1.8 1.6-1.6 1.8 1.2 1.5-.7z"/></g></svg>
 <div class="l">Все<br>параметры</div>
</div>
<div class="tile" style="left:1176px;top:512px">
 <svg class="a" style="left:0;top:0" width="24" height="28" viewBox="0 0 24 28"><g fill="none" stroke="#fff" stroke-width="1.1"><path d="M5.5 23.5a9.5 9.5 0 0 1 8.5-9.3"/><path d="M8.6 23.5a6.4 6.4 0 0 1 5.4-6.2"/><path d="M11.7 23.5a3.3 3.3 0 0 1 2.3-3.1"/><rect x="15.5" y="9" width="4.2" height="4.2"/><path d="M17.6 13.2v10.6M16.5 10.8l1.1 1 1.1-1"/></g><circle cx="14.6" cy="23" r="1" fill="#fff"/></svg>
 <div class="l">Сеть</div>
</div>
<div class="tile" style="left:900px;top:580px">
 <svg class="a" style="left:0;top:0" width="24" height="28" viewBox="0 0 24 28"><g fill="none" stroke="#fff" stroke-width="1.1"><path d="M11.5 15.3H4.3V9.4h10.4v3.8"/><path d="M7 17.3h5M9.5 15.3v2"/><rect x="13.4" y="13.5" width="6.2" height="9.6"/><circle cx="16.5" cy="16.4" r=".9"/></g><rect x="15.7" y="19.3" width="1.6" height="1.4" fill="#fff"/></svg>
 <div class="l">Подключение</div>
</div>
<div class="tile" style="left:992px;top:580px">
 <svg class="a" style="left:0;top:0" width="24" height="28" viewBox="0 0 24 28"><g fill="none" stroke="#fff" stroke-width="1.1"><path d="M8.3 14.3v-4.3h11.4v9.1h-6.2"/><rect x="5.3" y="14.6" width="7.9" height="5.4"/><path d="M4.2 21.3h10.2"/></g></svg>
 <div class="l">Передавать на<br>экран</div>
</div>
<div class="tile" style="left:1084px;top:580px">
 <svg class="a" style="left:0;top:0" width="24" height="28" viewBox="0 0 24 28"><g fill="none" stroke="#fff" stroke-width="1.3"><circle cx="6.4" cy="14.5" r="2.2"/><circle cx="16.6" cy="14.5" r="2.2"/><circle cx="11.5" cy="19.5" r="2.2"/><path d="M8.6 14.7C10.5 15.5 11.2 16 12.6 17.6M14.4 14.7C12.8 15.5 11.4 16.4 10.3 17.6M10.6 12.3l.9.8.9-.8"/></g></svg>
 <div class="l">Виртуальная<br>сеть (VPN)</div>
</div>
<div class="tile" style="left:1176px;top:580px">
 <svg class="a" style="left:0;top:0" width="24" height="28" viewBox="0 0 24 28"><path d="M12.5 8.6A7.6 7.6 0 1 1 4.3 20.3 9.6 9.6 0 0 0 12.5 8.6z" fill="none" stroke="#fff" stroke-width="1.2" stroke-linejoin="miter"/></svg>
 <div class="l">Фокусировка<br>внимания</div>
</div>
<div class="tile" style="left:900px;top:648px">
 <svg class="a" style="left:0;top:0" width="24" height="28" viewBox="0 0 24 28"><g fill="none" stroke="#fff" stroke-width="1.1"><path d="M6.5 14.2C6.2 10.6 8.6 8.4 11.6 8.4c2.2 0 3.9 1.3 4.6 3 2.2.2 3.8 2 3.8 4.3 0 2.6-2 4.4-4.4 4.4h-4.3"/><rect x="4.3" y="16" width="2.7" height="2.7"/><rect x="6.3" y="20.5" width="2.7" height="2.7"/><path d="M7 17.5l8-3.3M8.7 20.3l6.8-2.3"/></g></svg>
 <div class="l">Фрагмент<br>экрана</div>
</div>
<!-- TASKBAR -->
<svg class="a" style="left:15px;top:739px" width="18" height="18" viewBox="0 0 18 18"><path d="M0.6 2.6L7.6 1.6V8.3H0.6zM8.4 1.5L17.4 .2V8.3H8.4zM0.6 9.1H7.6V15.9L0.6 14.9zM8.4 9.1H17.4V17.3L8.4 16z" fill="#fff"/></svg>
<div class="a" style="left:48px;top:728px;width:344px;height:40px;background:#f0f0f0;border-bottom:1px solid #c8c8c8"></div>
<svg class="a" style="left:59px;top:739px" width="18" height="18" viewBox="0 0 18 18"><circle cx="11" cy="6.5" r="5.2" fill="none" stroke="#111" stroke-width="1.3"/><path d="M7.3 10.2L1.3 16.2" stroke="#111" stroke-width="1.4"/></svg>
<div class="a" style="left:88px;top:741px;font-size:15px;line-height:15px;color:#1a1a1a">Чтобы начать поиск, введите здесь запрос</div>
<svg class="a" style="left:407px;top:739px" width="18" height="18" viewBox="0 0 18 18"><circle cx="9" cy="9" r="6.8" fill="none" stroke="#fff" stroke-width="1.8"/></svg>
<svg class="a" style="left:455px;top:739px" width="18" height="17" viewBox="0 0 18 17"><g fill="none" stroke="#fff" stroke-width="1.2"><path d="M.8 1v2h11V1M.8 16v-2h11v2"/><rect x="2.6" y="5.2" width="7.4" height="6.8"/><path d="M15.9 1v15"/></g><rect x="14.6" y="5" width="2.6" height="2.6" fill="#fff"/></svg>
<!-- edge -->
<svg class="a" style="left:498px;top:732px" width="32" height="32" viewBox="0 0 32 32">
 <defs>
  <linearGradient id="eg1" x1="0" y1="0" x2="1" y2=".6"><stop offset="0" stop-color="#33bff2"/><stop offset=".55" stop-color="#36c6b8"/><stop offset="1" stop-color="#6ae85a"/></linearGradient>
  <linearGradient id="eg2" x1="0" y1="0" x2=".3" y2="1"><stop offset="0" stop-color="#1e96e8"/><stop offset="1" stop-color="#0c66c0"/></linearGradient>
 </defs>
 <circle cx="17.1" cy="15.8" r="12.1" fill="url(#eg2)"/>
 <path d="M5 13C6 7.6 11 3.7 17.1 3.7 23.8 3.7 29.2 8.8 29.2 14.5 29.2 17.5 27.6 19.7 24.5 20 21.5 20.3 19 19.6 18.4 18.6 19.7 17.6 20 16.2 19.6 14.6 19 11.8 16.6 10 13.4 10 9.6 10 6.4 11.6 5 13z" fill="url(#eg1)"/>
 <path d="M12.3 18c0-2.6 2-4.6 4.4-4.6 1.6 0 2.6 1 2.6 2.3 0 1.6-1 2.6-1 3 0 1.2 2.4 1.8 4.6 1.8 2.2 0 3.8-.6 5-1.4-.9 4.6-5.2 8.6-10.6 8.6-3.2 0-5-4.8-5-9.7z" fill="#0e4f9e"/>
 <path d="M14 17.2c.4-1.8 1.8-3.1 3.2-3.1 1.1 0 1.8.7 1.8 1.6 0 1.3-.9 2.1-.9 3-1.2.3-2.6-.6-4.1-1.5z" fill="#21333d"/>
</svg>
<!-- explorer -->
<svg class="a" style="left:552px;top:738px" width="24" height="20" viewBox="0 0 24 20">
 <path d="M.5 .5h7.5l1.6 1.6H22.5V18.5H.5z" fill="#e3a616"/>
 <path d="M.5 3.2h22v15.3H.5z" fill="#fcd25e"/>
 <path d="M5 18.5v-8.3h13v8.3h-3.8v-4.8h-5.4v4.8z" fill="#3787d8"/>
</svg>
<div class="a" style="left:544px;top:766px;width:40px;height:2px;background:#76b9ed"></div>
<!-- store -->
<svg class="a" style="left:596px;top:730px" width="32" height="32" viewBox="0 0 32 32">
 <path d="M11.9 12.3V9.8c0-2.3 1.8-4 4.3-4s4.2 1.7 4.2 4v2.5" fill="none" stroke="#fff" stroke-width="1.2"/>
 <path d="M14.2 12.3V10.6c0-1.4 1-2.4 2.2-2.4" fill="none" stroke="#fff" stroke-width="1"/>
 <path d="M4.9 11.8h23.3v16.2c0 .5-.4.9-.9.9H5.8c-.5 0-.9-.4-.9-.9z" fill="#fff"/>
 <rect x="10.8" y="15" width="4.9" height="4.8" fill="#f25022"/><rect x="17.2" y="15" width="4.9" height="4.8" fill="#7fba00"/>
 <rect x="10.8" y="21.1" width="4.9" height="4.8" fill="#00a4ef"/><rect x="17.2" y="21.1" width="4.9" height="4.8" fill="#ffb900"/>
</svg>
<!-- mail -->
<svg class="a" style="left:649px;top:737px" width="26" height="21" viewBox="0 0 26 21">
 <path d="M.8 6.2L13 .9l12.1 5.3V19.9H.8z" fill="#fff"/>
 <path d="M2.1 7.1H23.4L15.2 11.9 19.5 16.3z" fill="#21333d"/>
</svg>
<!-- tray -->
<svg class="a" style="left:923px;top:738px" width="24" height="17" viewBox="0 0 24 17">
 <defs><linearGradient id="cg" x1="0" y1="0" x2="1" y2="1"><stop offset="0" stop-color="#e8f5ff"/><stop offset=".5" stop-color="#b8dcf8"/><stop offset="1" stop-color="#7cbbea"/></linearGradient></defs>
 <path d="M5.5 16.5C2.8 16.5 1 14.6 1 12.3c0-2.1 1.5-3.9 3.6-4.2C5.2 4.6 8 2 11.7 2c2.6 0 4.7 1.3 5.8 3.3 3 .1 5.5 2.5 5.5 5.6 0 3.1-2.5 5.6-5.6 5.6z" fill="url(#cg)"/>
 <path d="M17.5 5.3c1.8-.1 3.5.8 4.5 2.3" fill="none" stroke="#3b86cc" stroke-width="1.2"/>
</svg>
<div class="a" style="left:955px;top:742px;font-size:14px;line-height:14px;color:#fff;letter-spacing:-0.6px">5°C</div>
<div class="a" style="left:985px;top:742px;font-size:14px;line-height:14px;color:#fff">Облачно</div>
<svg class="a" style="left:1058px;top:743px" width="14" height="9" viewBox="0 0 14 9"><path d="M1 8l6-6.2L13 8" fill="none" stroke="#fff" stroke-width="1.2"/></svg>
<svg class="a" style="left:1080px;top:741px" width="18" height="15" viewBox="0 0 18 15"><g fill="none" stroke="#fff" stroke-width="1.25"><path d="M5.9 1.4H16.4V10.5H3.5M9.3 10.5V13.4M5.9 13.4H13M3.5 7V13.8"/><rect x="1.5" y="1.4" width="4.4" height="5.4"/><path d="M2.6 3.7l1.1.9 1.1-.9"/></g></svg>
<svg class="a" style="left:1104px;top:741px" width="18" height="15" viewBox="0 0 18 15"><g fill="none" stroke="#fff" stroke-width="1.2"><path d="M1.3 4.1h2.3L7 1.2v11.6L3.6 9.9H1.3z"/><path d="M9.8 4.4c.7.7 1 1.6 1 2.6s-.3 1.9-1 2.6M11.9 2.4c1.2 1.2 1.8 2.8 1.8 4.6s-.6 3.4-1.8 4.6M14.2.5c1.6 1.8 2.5 4 2.5 6.5s-.9 4.7-2.5 6.5"/></g></svg>
<div class="a" style="left:1132px;top:742px;font-size:12px;line-height:12px;color:#fff;letter-spacing:-0.8px">РУС</div>
<div class="a" style="left:1180px;top:733px;font-size:12px;line-height:12px;color:#fff;letter-spacing:-0.6px">20:28</div>
<div class="a" style="left:1167px;top:751px;font-size:12px;line-height:12px;color:#fff;letter-spacing:-0.7px">01.10.2021</div>
<div class="a" style="left:1227px;top:728px;width:40px;height:40px;background:#2a3549"></div>
<svg class="a" style="left:1238px;top:739px" width="18" height="18" viewBox="0 0 18 18"><path d="M1.5 1.5h15v11.5h-5.8L9 15.5 7.3 13H1.5z" fill="none" stroke="#fff" stroke-width="1.2"/></svg>
<div class="a" style="left:1275px;top:728px;width:1px;height:40px;background:#5a6578"></div>
</body></html>
